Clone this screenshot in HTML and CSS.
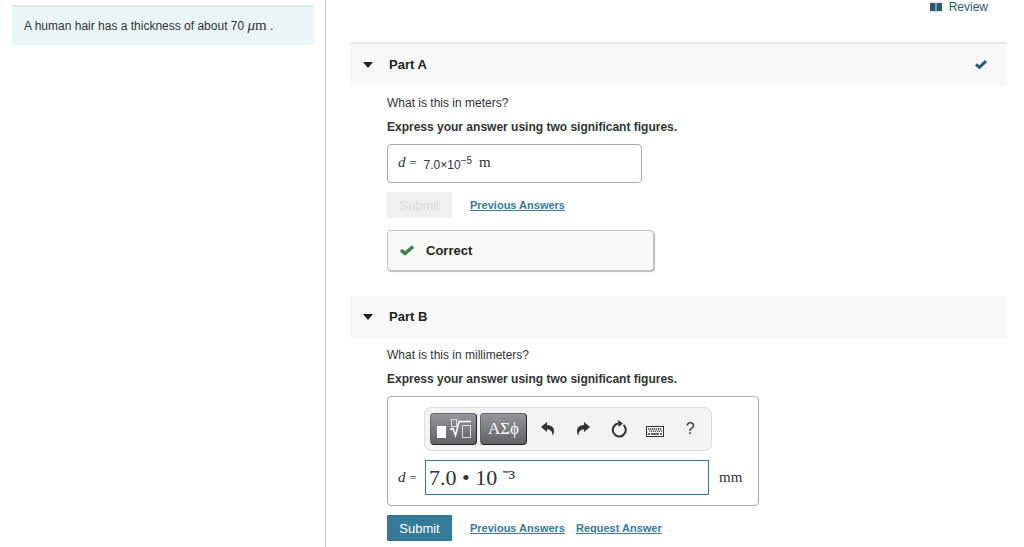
FILE: index.html
```html
<!DOCTYPE html>
<html lang="en">
  <head>
    <meta charset="utf-8" />
    <meta name="viewport" content="width=device-width, initial-scale=1" />
    <title>Human hair</title>
    <link rel="stylesheet" href="styles.css">
  </head>
  <body>
    <div class="page">
      <aside class="sidebar">
        <p class="intro">A human hair has a thickness of about 70 <span class="math"><i>μ</i>m</span> .</p>
      </aside>

      <main class="content">
        <div class="topbar">
          <a href="#" class="review">
            <svg width="12" height="10" viewBox="0 0 12 10">
              <path d="M0 1Q3 0.300 5.600 1V9.500Q3 8.500 0 9.200ZM12 1Q9 0.300 6.400 1V9.500Q9 8.500 12 9.200Z" fill="#255a70" />
            </svg>
            Review
          </a>
        </div>

        <section class="part">
          <header class="part-header first">
            <span class="arrow"></span>
            <h2>Part A</h2>
            <svg class="done" width="12" height="10" viewBox="0 0 12 10">
              <path d="M1 4.300L4.500 7.300L11 1.200" fill="none" stroke="#255a70" stroke-width="3" />
            </svg>
          </header>
          <div class="part-body">
            <p>What is this in meters?</p>
            <p class="instructions">Express your answer using two significant figures.</p>
            <div class="answer">
              <span class="math"><i>d</i> <small>=</small></span>
              <span class="value">7.0×10<sup>−5</sup></span>
              <span class="math">m</span>
            </div>
            <div class="actions">
              <button type="button" class="submit" disabled>Submit</button>
              <a href="#">Previous Answers</a>
            </div>
            <div class="feedback">
              <svg width="14" height="12" viewBox="0 0 14 12">
                <path d="M1 5L5 8.500L13 1.500" fill="none" stroke="#3a8340" stroke-width="3.400" />
              </svg>
              Correct
            </div>
          </div>
        </section>

        <section class="part">
          <header class="part-header">
            <span class="arrow"></span>
            <h2>Part B</h2>
          </header>
          <form class="part-body">
            <p>What is this in millimeters?</p>
            <p class="instructions">Express your answer using two significant figures.</p>
            <div class="editor">
              <div class="toolbar">
                <button type="button" class="palette" aria-label="Templates">
                  <svg width="36" height="22" viewBox="0 0 36 22">
                    <rect x="1" y="8" width="9" height="12" fill="#fff" />
                    <g fill="none" stroke="#fff">
                      <path d="M14 11.500L17 10.500L19.500 17.500L23 3.500H35" stroke-width="1.500" />
                      <rect x="15.500" y="1.500" width="5" height="7" stroke="#ddd" />
                      <rect x="26.500" y="7.500" width="8" height="12" stroke="#ddd" />
                    </g>
                  </svg>
                </button>
                <button type="button" class="palette">ΑΣϕ</button>
                <button type="button" class="tool" aria-label="Undo">
                  <svg width="14" height="14" viewBox="0 0 14 14">
                    <path d="M0 5L6 0V3Q13 3.500 13 9Q13 12 11.500 13.500Q11.500 7.500 6 7.300V10Z" fill="#333" />
                  </svg>
                </button>
                <button type="button" class="tool" aria-label="Redo">
                  <svg width="14" height="14" viewBox="0 0 14 14">
                    <path d="M14 5L8 0V3Q1 3.500 1 9Q1 12 2.500 13.500Q2.500 7.500 8 7.300V10Z" fill="#333" />
                  </svg>
                </button>
                <button type="button" class="tool" aria-label="Reset">
                  <svg width="16" height="18" viewBox="0 0 16 18">
                    <path d="M12.500 5A6.500 6.500 0 1 1 7 3.600" fill="none" stroke="#333" stroke-width="2" />
                    <path d="M7 0L12 3.500L7.500 7Z" fill="#333" />
                  </svg>
                </button>
                <button type="button" class="tool" aria-label="Keyboard shortcuts">
                  <svg class="keyboard" width="18" height="11" viewBox="0 0 18 11">
                    <rect x="0.500" y="0.500" width="17" height="10" fill="#fff" stroke="#333" />
                    <path d="M2 3H16M3 5.200H16" stroke="#333" stroke-width="1.300" stroke-dasharray="1.300 0.700" />
                    <path d="M2 8H4M5 8H13M14 8H16" stroke="#333" stroke-width="1.300" />
                  </svg>
                </button>
                <button type="button" class="tool help" aria-label="Help">?</button>
              </div>
              <label for="answer-b" class="math"><i>d</i> <small>=</small></label>
              <input type="text" id="answer-b" class="math-input" value="7.0 • 10&thinsp;⁻³" />
              <span class="math unit">mm</span>
            </div>
            <div class="actions">
              <button type="submit" class="submit">Submit</button>
              <a href="#">Previous Answers</a>
              <a href="#">Request Answer</a>
            </div>
          </form>
        </section>
      </main>
    </div>
  </body>
</html>
```

FILE: styles.css
```css
* {
  box-sizing: border-box;
}

body {
  margin: 0;
  font-family: "Liberation Sans", Arial, sans-serif;
  font-size: 12px;
  line-height: 16px;
  color: #333;
  background: #fff;
}

p,
h2 {
  margin: 0;
}

button {
  font-family: inherit;
  cursor: pointer;
}

svg {
  display: block;
}

.page {
  display: grid;
  grid-template-columns: 326px 1fr;
  min-height: 100vh;
}

.sidebar {
  padding: 5px 12px;
  border-right: 1px solid #c3cad6;
}

/* Problem statement */
.intro {
  padding: 11px 12px;
  background: #e9f5f7;
  border-top: 2px solid #e2e9eb;
}

.math {
  font-family: "Liberation Serif", "Times New Roman", serif;
  font-size: 15px;
  line-height: 1;
}

.math small {
  font-size: 13px;
}

.content {
  padding: 0 17px 4px 24px;
}

.topbar {
  display: flex;
  justify-content: flex-end;
  height: 42px;
  padding-right: 19px;
}

.review {
  display: flex;
  align-items: center;
  gap: 7px;
  height: 14px;
  color: #255a70;
  text-decoration: none;
}

/* Part header */
.part-header {
  display: flex;
  align-items: center;
  height: 42px;
  padding: 0 20px 0 13px;
  background: #f8f8f8;
}

.part-header.first {
  height: 44px;
  border-top: 2px solid #e9e9e9;
}

.arrow {
  border: 5px solid transparent;
  border-top: 6px solid #222;
  border-bottom: none;
}

.part-header h2 {
  margin-left: 16px;
  font-size: 13px;
  color: #222;
}

.done {
  margin-left: auto;
}

.part-body {
  padding: 9px 0 25px 37px;
}

.part:last-child .part-body {
  padding-bottom: 0;
}

.instructions {
  margin: 8px 0 9px;
  font-weight: bold;
}

/* Submitted answer */
.answer {
  display: flex;
  align-items: center;
  gap: 7px;
  width: 255px;
  height: 39px;
  padding: 0 10px 3px;
  border: 1px solid #aaa;
  border-radius: 4px;
}

.answer .value {
  padding-top: 4px;
}

.value sup {
  font-size: 10px;
  line-height: 1;
}

.actions {
  display: flex;
  align-items: center;
  gap: 11px;
  margin-top: 9px;
}

.actions a {
  font-size: 11px;
  font-weight: bold;
  color: #367a9c;
}

.submit {
  width: 65px;
  height: 26px;
  margin-right: 7px;
  padding: 0;
  border: none;
  border-radius: 1px;
  font-size: 13px;
  color: #fff;
  background: #367a99;
}

.submit:disabled {
  color: #ddd;
  background: #f0f0f0;
  cursor: default;
}

.feedback {
  display: flex;
  align-items: center;
  gap: 12px;
  width: 267px;
  height: 41px;
  margin-top: 12px;
  padding: 0 12px;
  border: 1px solid #c4c4c4;
  border-radius: 4px;
  box-shadow: 1px 1px 1px #bbb;
  font-size: 13px;
  font-weight: bold;
  color: #222;
  background: #f8f8f8;
}

/* Equation editor */
.editor {
  display: grid;
  grid-template-columns: 27px 284px 1fr;
  align-items: center;
  row-gap: 9px;
  width: 372px;
  height: 110px;
  padding: 10px 10px 11px;
  border: 1px solid #aaa;
  border-radius: 4px;
}

.toolbar {
  grid-column: 2 / 4;
  display: flex;
  align-items: center;
  width: 288px;
  height: 44px;
  margin-left: -1px;
  padding: 0 3px 0 5px;
  border: 1px solid #ddd;
  border-radius: 7px;
  background: #f3f3f3;
}

.palette {
  display: flex;
  align-items: center;
  justify-content: center;
  width: 47px;
  height: 32px;
  margin-right: 3px;
  padding: 0;
  border: 1px solid #222;
  border-top-color: #666;
  border-left-color: #666;
  border-radius: 4px;
  font-family: "Liberation Serif", serif;
  font-size: 17px;
  color: #fff;
  background: linear-gradient(#96959b, #626165);
}

.tool {
  display: flex;
  align-items: center;
  justify-content: center;
  flex: 1;
  padding: 0;
  border: none;
  color: #333;
  background: none;
}

.keyboard {
  margin-top: 4px;
}

.help {
  font-size: 16px;
}

.math-input {
  width: 284px;
  height: 35px;
  padding: 0 3px 3px;
  border: 1px solid #367a99;
  font-family: "Liberation Serif", "Times New Roman", serif;
  font-size: 22px;
  color: #333;
}

.unit {
  margin-left: 10px;
}
```
